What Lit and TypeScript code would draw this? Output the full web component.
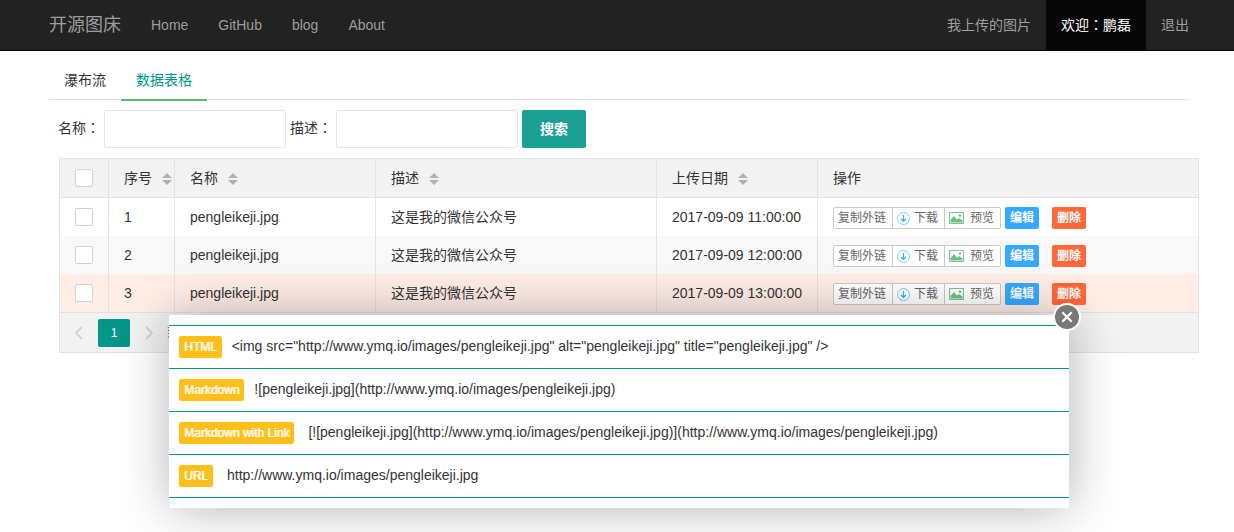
import { LitElement, html, css, svg } from "lit";
import { customElement, state } from "lit/decorators.js";

interface Picture {
  id: number;
  name: string;
  description: string;
  uploaded: string;
}

const PICTURES: Picture[] = [
  { id: 1, name: "pengleikeji.jpg", description: "这是我的微信公众号", uploaded: "2017-09-09 11:00:00" },
  { id: 2, name: "pengleikeji.jpg", description: "这是我的微信公众号", uploaded: "2017-09-09 12:00:00" },
  { id: 3, name: "pengleikeji.jpg", description: "这是我的微信公众号", uploaded: "2017-09-09 13:00:00" },
];

const FILE = "pengleikeji.jpg";
const URL_TEXT = `http://www.ymq.io/images/${FILE}`;
const LINKS = [
  { label: "HTML", text: `<img src="${URL_TEXT}" alt="${FILE}" title="${FILE}" />`, wide: false },
  { label: "Markdown", text: `![${FILE}](${URL_TEXT})`, wide: false },
  { label: "Markdown with Link", text: `[![${FILE}](${URL_TEXT})](${URL_TEXT})`, wide: true },
  { label: "URL", text: URL_TEXT, wide: true },
];

const sortIcon = svg`<svg width="10" height="12" viewBox="0 0 10 12" fill="#b2b2b2" aria-hidden="true">
  <path d="M5 0L10 5H0Z M0 7H10L5 12Z"/></svg>`;

const downloadIcon = svg`<svg width="13" height="13" viewBox="0 0 13 13" fill="none" aria-hidden="true">
  <circle cx="6.5" cy="6.5" r="6" stroke="#7fcdf2"/>
  <path d="M6.5 3V9.5M4 7L6.5 9.5L9 7" stroke="#2fb0ee" stroke-width="1.2"/></svg>`;

const pictureIcon = svg`<svg width="15" height="12" viewBox="0 0 15 12" fill="none" aria-hidden="true">
  <rect x="0.5" y="0.5" width="14" height="11" rx="0.8" stroke="#7cc690" stroke-width="1.2"/>
  <path d="M1.5 10.5V8L5 4L8 7.5L10 6L13.5 8.5V10.5Z" fill="#6cc085"/>
  <circle cx="11" cy="3.6" r="1.2" fill="#5cb878"/></svg>`;

const chevron = (d: string) => svg`<svg width="8" height="14" viewBox="0 0 8 14" fill="none" aria-hidden="true">
  <path d=${d} stroke="#d2d2d2" stroke-width="1.8"/></svg>`;

const closeIcon = svg`<svg width="28" height="28" viewBox="0 0 28 28" aria-hidden="true">
  <circle cx="14" cy="14" r="14" fill="#fff"/>
  <circle cx="14" cy="14" r="12" fill="#787878"/>
  <path d="M9.3 9.3L18.7 18.7M18.7 9.3L9.3 18.7" stroke="#fff" stroke-width="2.2"/></svg>`;

@customElement("app-root")
export class AppRoot extends LitElement {
  @state() private linksOpen = true;

  static styles = css`
    :host {
      display: block;
      min-height: 100vh;
      color: #333;
      background: #fff;
      font: 14px/20px "Liberation Sans", "Noto Sans CJK SC", sans-serif;
    }
    * { box-sizing: border-box; }
    a { color: inherit; text-decoration: none; }
    button, input { font: inherit; margin: 0; }
    button { cursor: pointer; }
    svg { display: block; flex: none; }
    .colon { font-family: "Noto Sans CJK TC", sans-serif; line-height: 1; }

    .navbar {
      display: flex;
      justify-content: space-between;
      padding: 0 30px 0 34px;
      background: #222;
      color: #9d9d9d;
      border-bottom: 1px solid #080808;
    }
    .nav { display: flex; }
    .nav a { padding: 15px; white-space: nowrap; }
    .nav .brand { font-size: 18px; }
    .nav .current { background: #080808; color: #fff; }

    .page { position: relative; padding-top: 9px; margin: 0 45px 0 49px; }
    .tabs { display: flex; height: 40px; border-bottom: 1px solid #e2e2e2; }
    .tab { height: 41px; padding: 0 15px; line-height: 40px; }
    .tab.selected { color: #009688; border-bottom: 2px solid #5fb878; }

    .search { display: flex; align-items: center; gap: 4px; padding: 10px 9px; }
    .search label { padding-bottom: 2px; }
    .field {
      width: 182px;
      height: 38px;
      padding: 0 10px;
      border: 1px solid #e6e6e6;
      border-radius: 2px;
      background: #fff;
    }
    .submit {
      height: 38px;
      padding: 0 18px;
      border: 0;
      border-radius: 2px;
      background: #1aa194;
      color: #fff;
      font-weight: bold;
    }

    .grid { margin: 0 -10px 0 10px; border: 1px solid #e2e2e2; }
    table { width: 100%; table-layout: fixed; border-collapse: separate; border-spacing: 0; }
    th, td {
      height: 38px;
      padding: 0 0 0 15px;
      text-align: left;
      font-weight: normal;
      white-space: nowrap;
      overflow: hidden;
      border-right: 1px solid #e2e2e2;
    }
    th { height: 39px; background: #f2f2f2; border-bottom: 1px solid #e2e2e2; }
    th:last-child, td:last-child { border-right: 0; }
    .w-check { width: 49px; }
    .w-id { width: 66px; }
    .w-name { width: 201px; }
    .w-desc { width: 281px; }
    .w-date { width: 161px; }
    tr.even { background: #f8f8f8; }
    tr.marked { background: #ffede6; }
    .check {
      appearance: none;
      display: block;
      width: 18px;
      height: 18px;
      border: 1px solid #d2d2d2;
      border-radius: 2px;
      background: #fff;
    }
    .check:checked { background: #5fb878; border-color: #5fb878; }
    .sortable { display: flex; align-items: center; gap: 10px; }
    .sort { padding: 2px 0 0; border: 0; background: none; }

    .actions { display: flex; padding-top: 2px; font-size: 12px; }
    .group { display: flex; margin-right: 4px; }
    .tool {
      display: flex;
      align-items: center;
      gap: 4px;
      height: 22px;
      padding: 0 6px 0 4px;
      border: 1px solid #c9c9c9;
      background: #fff;
      color: #666;
    }
    .tool + .tool { margin-left: -1px; }
    .tool.preview { gap: 6px; }
    .tool:first-child { border-radius: 2px 0 0 2px; }
    .tool:last-child { border-radius: 0 2px 2px 0; }
    .edit, .remove {
      height: 22px;
      padding: 0 5px;
      border: 0;
      border-radius: 2px;
      color: #fff;
      font-weight: bold;
      background: #35a9ff;
    }
    .remove { margin-left: 13px; background: #ff6838; }

    .pager {
      display: flex;
      align-items: center;
      height: 40px;
      padding: 0 15px;
      background: #f2f2f2;
      border-top: 1px solid #e2e2e2;
      font-size: 12px;
    }
    .step { padding: 0; border: 0; background: none; }
    .here {
      min-width: 32px;
      margin: 0 15px;
      padding: 0 12px;
      line-height: 28px;
      border: 0;
      border-radius: 2px;
      background: #009688;
      color: #fff;
    }
    .jump { padding-left: 14px; }

    .layer {
      position: absolute;
      top: 264px;
      left: 50%;
      width: 900px;
      margin-left: -450px;
      padding: 10px 0;
      border-radius: 2px;
      background: #fff;
      box-shadow: 1px 1px 50px rgba(0, 0, 0, 0.3);
    }
    .links { margin: 0; border-top: 1px solid #009688; }
    .link {
      display: flex;
      align-items: center;
      gap: 10px;
      padding: 10px;
      border-bottom: 1px solid #009688;
    }
    .link.wide { gap: 14px; }
    .link dd { margin: 0; padding-bottom: 2px; }
    .badge {
      padding: 0 5px;
      border-radius: 2px;
      background: #ffbf1a;
      color: #fff;
      font-size: 12px;
      line-height: 22px;
      text-shadow: 1px 0 rgba(255, 255, 255, 0.7);
      white-space: nowrap;
    }
    .close {
      position: absolute;
      top: -12px;
      right: -12px;
      padding: 0;
      border: 0;
      border-radius: 50%;
      background: none;
    }
  `;

  private sortHeader(label: string, width: string) {
    return html`<th class=${width}>
      <div class="sortable">${label}<button class="sort" aria-label="${label}">${sortIcon}</button></div>
    </th>`;
  }

  private row(p: Picture) {
    return html`<tr class=${p.id === 3 ? "marked" : p.id % 2 ? "" : "even"}>
      <td><input class="check" type="checkbox" aria-label="${p.id}" /></td>
      <td>${p.id}</td>
      <td>${p.name}</td>
      <td>${p.description}</td>
      <td>${p.uploaded}</td>
      <td>
        <div class="actions">
          <div class="group">
            <button class="tool" @click=${() => (this.linksOpen = true)}>复制外链</button>
            <button class="tool">${downloadIcon}下载</button>
            <button class="tool preview">${pictureIcon}预览</button>
          </div>
          <button class="edit">编辑</button>
          <button class="remove">删除</button>
        </div>
      </td>
    </tr>`;
  }

  private layer() {
    return html`<div class="layer" role="dialog">
      <dl class="links">
        ${LINKS.map(
          (l) => html`<div class="link ${l.wide ? "wide" : ""}">
            <dt class="badge">${l.label}</dt><dd>${l.text}</dd>
          </div>`
        )}
      </dl>
      <button class="close" aria-label="×" @click=${() => (this.linksOpen = false)}>${closeIcon}</button>
    </div>`;
  }

  render() {
    return html`
      <header class="navbar">
        <nav class="nav">
          <a class="brand" href="#">开源图床</a>
          <a href="#">Home</a>
          <a href="#">GitHub</a>
          <a href="#">blog</a>
          <a href="#">About</a>
        </nav>
        <nav class="nav">
          <a href="#">我上传的图片</a>
          <a class="current" href="#">欢迎<span class="colon">：</span>鹏磊</a>
          <a href="#">退出</a>
        </nav>
      </header>
      <main class="page">
        <nav class="tabs">
          <a class="tab" href="#">瀑布流</a>
          <a class="tab selected" href="#">数据表格</a>
        </nav>
        <form class="search" @submit=${(e: Event) => e.preventDefault()}>
          <label for="name">名称<span class="colon">：</span></label>
          <input class="field" id="name" type="text" />
          <label for="desc">描述<span class="colon">：</span></label>
          <input class="field" id="desc" type="text" />
          <button class="submit">搜索</button>
        </form>
        <section class="grid">
          <table>
            <thead>
              <tr>
                <th class="w-check"><input class="check" type="checkbox" aria-label="序号" /></th>
                ${this.sortHeader("序号", "w-id")}
                ${this.sortHeader("名称", "w-name")}
                ${this.sortHeader("描述", "w-desc")}
                ${this.sortHeader("上传日期", "w-date")}
                <th>操作</th>
              </tr>
            </thead>
            <tbody>${PICTURES.map((p) => this.row(p))}</tbody>
          </table>
          <div class="pager">
            <button class="step" aria-label="‹">${chevron("M7 1L1 7L7 13")}</button>
            <button class="here">1</button>
            <button class="step" aria-label="›">${chevron("M1 1L7 7L1 13")}</button>
            <span class="jump">到第</span>
          </div>
        </section>
        ${this.linksOpen ? this.layer() : ""}
      </main>
    `;
  }
}
